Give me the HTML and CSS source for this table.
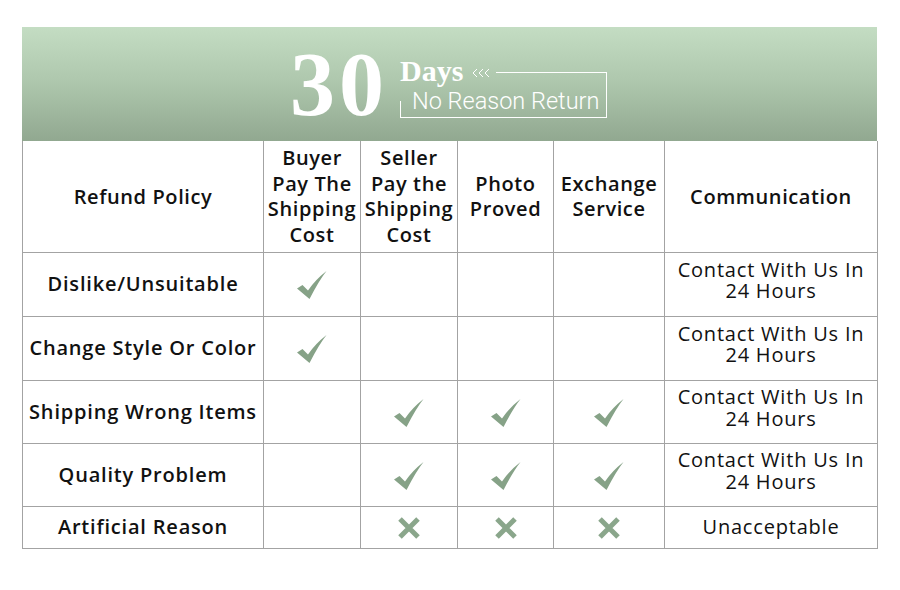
FILE: index.html
```html
<!DOCTYPE html>
<html>
<head>
<meta charset="utf-8">
<link rel="stylesheet" href="styles.css">
</head>
<body>
<div class="sheet">
  <div class="banner">
    <div class="big">30</div>
    <div class="tag">
      <div class="tag-top">
        <span class="days">Days</span>
        <svg class="chev" width="24" height="10" viewBox="0 0 24 10"><polyline points="5,1 1,5 5,9" /><polyline points="11,1 7,5 11,9" /><polyline points="17,1 13,5 17,9" /></svg>
      </div>
      <div class="reason">No Reason Return</div>
    </div>
  </div>
  <table class="policy">
    <colgroup>
      <col class="c1"><col class="c2"><col class="c3"><col class="c4"><col class="c5"><col class="c6">
    </colgroup>
    <tr class="head">
      <th>Refund Policy</th>
      <th>Buyer<br>Pay The<br>Shipping<br>Cost</th>
      <th>Seller<br>Pay the<br>Shipping<br>Cost</th>
      <th>Photo<br>Proved</th>
      <th>Exchange<br>Service</th>
      <th>Communication</th>
    </tr>
    <tr class="r64">
      <th>Dislike/Unsuitable</th>
      <td><svg class="ok" viewBox="0 0 30 28"><path d="M0 17.5 L5.5 14 L11 19.5 Q18 9 29.5 0 Q22 9.5 12.5 28 Z"/></svg></td>
      <td></td><td></td><td></td>
      <td class="comm">Contact With Us In<br>24 Hours</td>
    </tr>
    <tr class="r64">
      <th>Change Style Or Color</th>
      <td><svg class="ok" viewBox="0 0 30 28"><path d="M0 17.5 L5.5 14 L11 19.5 Q18 9 29.5 0 Q22 9.5 12.5 28 Z"/></svg></td>
      <td></td><td></td><td></td>
      <td class="comm">Contact With Us In<br>24 Hours</td>
    </tr>
    <tr class="r63">
      <th>Shipping Wrong Items</th>
      <td></td>
      <td><svg class="ok" viewBox="0 0 30 28"><path d="M0 17.5 L5.5 14 L11 19.5 Q18 9 29.5 0 Q22 9.5 12.5 28 Z"/></svg></td>
      <td><svg class="ok" viewBox="0 0 30 28"><path d="M0 17.5 L5.5 14 L11 19.5 Q18 9 29.5 0 Q22 9.5 12.5 28 Z"/></svg></td>
      <td><svg class="ok" viewBox="0 0 30 28"><path d="M0 17.5 L5.5 14 L11 19.5 Q18 9 29.5 0 Q22 9.5 12.5 28 Z"/></svg></td>
      <td class="comm">Contact With Us In<br>24 Hours</td>
    </tr>
    <tr class="r63">
      <th>Quality Problem</th>
      <td></td>
      <td><svg class="ok" viewBox="0 0 30 28"><path d="M0 17.5 L5.5 14 L11 19.5 Q18 9 29.5 0 Q22 9.5 12.5 28 Z"/></svg></td>
      <td><svg class="ok" viewBox="0 0 30 28"><path d="M0 17.5 L5.5 14 L11 19.5 Q18 9 29.5 0 Q22 9.5 12.5 28 Z"/></svg></td>
      <td><svg class="ok" viewBox="0 0 30 28"><path d="M0 17.5 L5.5 14 L11 19.5 Q18 9 29.5 0 Q22 9.5 12.5 28 Z"/></svg></td>
      <td class="comm">Contact With Us In<br>24 Hours</td>
    </tr>
    <tr class="r42">
      <th>Artificial Reason</th>
      <td></td>
      <td><svg class="no" viewBox="0 0 22 22"><path d="M2 2 L20 20 M20 2 L2 20"/></svg></td>
      <td><svg class="no" viewBox="0 0 22 22"><path d="M2 2 L20 20 M20 2 L2 20"/></svg></td>
      <td><svg class="no" viewBox="0 0 22 22"><path d="M2 2 L20 20 M20 2 L2 20"/></svg></td>
      <td class="comm">Unacceptable</td>
    </tr>
  </table>
</div>
</body>
</html>
```

FILE: styles.css
```css
html, body {
  margin: 0;
  padding: 0;
  background: #ffffff;
}
.sheet {
  width: 855px;
  margin: 27px 0 0 22px;
}
.banner {
  height: 114px;
  background: linear-gradient(to bottom, #c4ddc3 0%, #adc6ac 50%, #91a890 100%);
  display: flex;
  justify-content: center;
  align-items: center;
  gap: 12px;
  color: #ffffff;
}
.big {
  font-family: "Liberation Serif", serif;
  font-weight: bold;
  font-size: 90px;
  line-height: 90px;
  letter-spacing: 4px;
  margin-top: 2px;
  margin-left: -2px;
}
.tag {
  position: relative;
  width: 207px;
  height: 56px;
  margin-top: 12px;
}
.tag::before {
  content: "";
  position: absolute;
  left: 96px;
  right: 0;
  top: 10px;
  bottom: 0;
  border-top: 1px solid #ffffff;
  border-right: 1px solid #ffffff;
}
.tag::after {
  content: "";
  position: absolute;
  left: 0;
  right: 0;
  bottom: 0;
  height: 16px;
  border-left: 1px solid #ffffff;
  border-bottom: 1px solid #ffffff;
}
.tag-top {
  display: flex;
  align-items: center;
  height: 22px;
  margin-top: -2px;
}
.days {
  font-family: "Liberation Serif", serif;
  font-weight: bold;
  font-size: 30px;
  line-height: 22px;
}
.chev {
  margin-left: 9px;
  margin-top: 3px;
  fill: none;
  stroke: #ffffff;
  stroke-width: 1;
}
.reason {
  font-family: Roboto, sans-serif;
  font-weight: 300;
  font-size: 23.5px;
  line-height: 26px;
  padding-left: 12px;
  margin-top: 6px;
}
.policy {
  width: 855px;
  border-collapse: collapse;
  table-layout: fixed;
  font-family: "Open Sans", sans-serif;
  font-size: 20px;
  letter-spacing: 0.8px;
  color: #111111;
}
.c1 { width: 241px; }
.c2 { width: 97px; }
.c3 { width: 97px; }
.c4 { width: 96px; }
.c5 { width: 111px; }
.c6 { width: 213px; }
.policy th, .policy td {
  border: 1px solid #a3a3a3;
  text-align: center;
  vertical-align: middle;
  padding: 0;
}
.policy tr:first-child th {
  border-top: none;
}
.policy th {
  font-weight: 600;
  line-height: 25.5px;
  white-space: nowrap;
}
.head th {
  letter-spacing: 0.6px;
}
.head { height: 111px; }
.r64 { height: 64px; }
.r63 { height: 63px; }
.r42 { height: 42px; }
.comm {
  font-weight: 400;
  line-height: 21.5px;
}
.policy td.comm {
  padding-bottom: 8px;
}
.policy .r42 td.comm {
  padding-bottom: 0;
}
.ok {
  width: 30px;
  height: 28px;
  display: block;
  margin: 2px auto 0;
  fill: #86a287;
}
.no {
  width: 22px;
  height: 22px;
  display: block;
  margin: 2px auto 0;
  fill: none;
  stroke: #8aa68b;
  stroke-width: 5;
}
```
